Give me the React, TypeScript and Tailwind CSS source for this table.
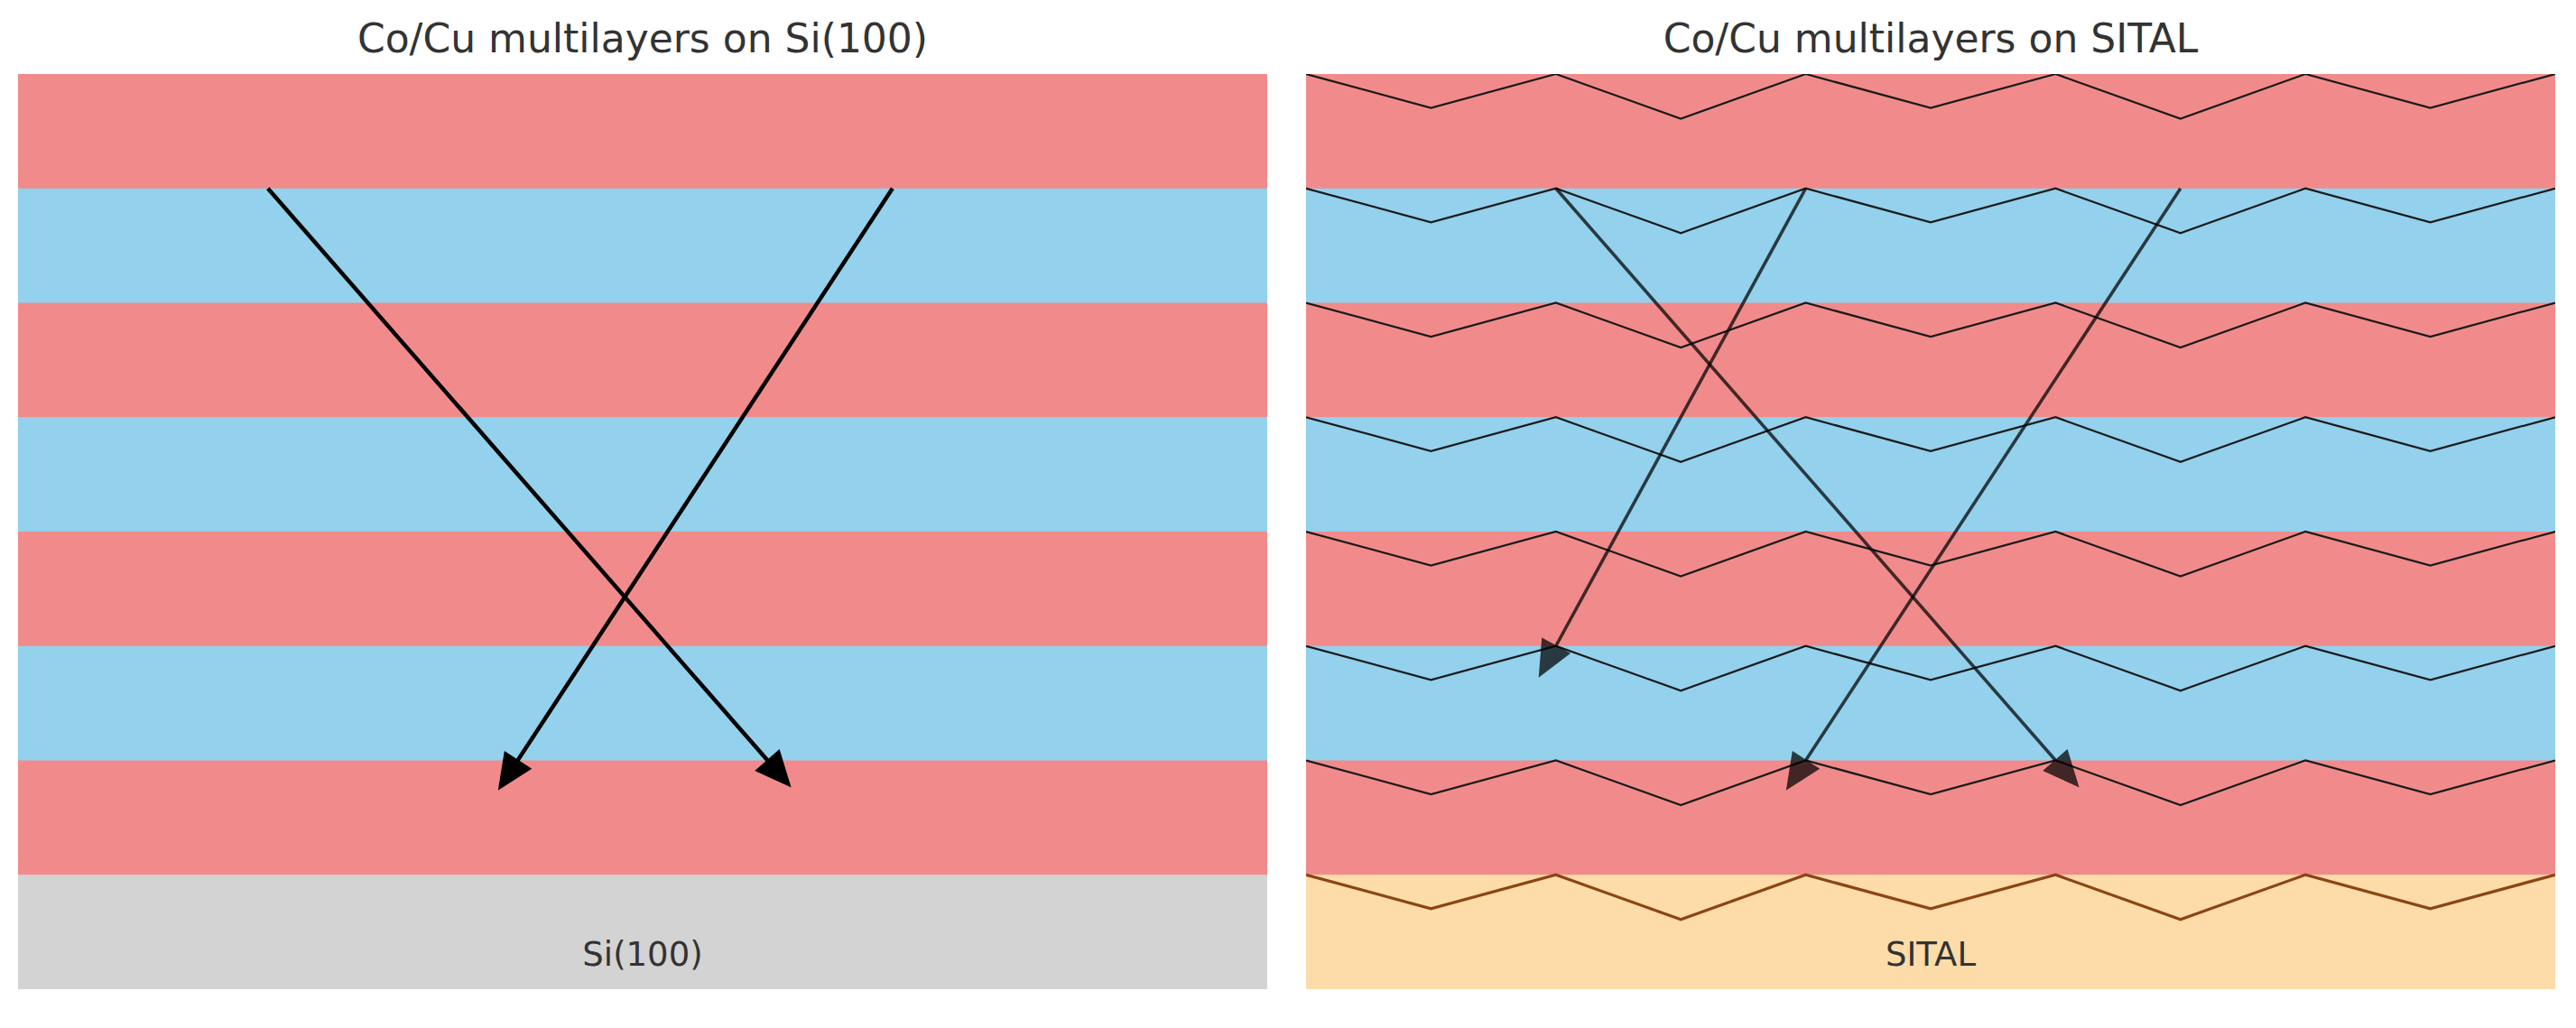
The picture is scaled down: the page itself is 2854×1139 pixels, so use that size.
const W = 1384;
const H = 1014;
const UX = W / 10; // one data unit across
const UY = H / 8; // one layer tall

const RED = '#F18B8B';
const BLUE = '#93D1EC';

type Arrow = { from: [number, number]; to: [number, number] };

// data coords -> svg px
const px = (x: number, y: number): [number, number] => [x * UX, (8 - y) * UY];

const headPoints = (bx: number, by: number, ux: number, uy: number, len = 38, half = 17) => {
  const tx = bx + ux * len;
  const ty = by + uy * len;
  const nx = -uy;
  const ny = ux;
  return `${tx},${ty} ${bx + nx * half},${by + ny * half} ${bx - nx * half},${by - ny * half}`;
};

const ArrowShape = ({ arrow, width, opacity }: { arrow: Arrow; width: number; opacity: number }) => {
  const [x1, y1] = px(...arrow.from);
  const [x2, y2] = px(...arrow.to);
  const dx = x2 - x1;
  const dy = y2 - y1;
  const l = Math.hypot(dx, dy);
  const ux = dx / l;
  const uy = dy / l;
  return (
    <g opacity={opacity}>
      <line x1={x1} y1={y1} x2={x2 + ux * 4} y2={y2 + uy * 4} stroke="#000" strokeWidth={width} />
      <polygon points={headPoints(x2, y2, ux, uy)} fill="#000" stroke="#000" strokeWidth={1.5} strokeLinejoin="miter" />
    </g>
  );
};

const zigzag = (k: number) => {
  const base = k * UY;
  const pts: string[] = [];
  for (let j = 0; j <= 10; j++) {
    const depth = j % 2 === 0 ? 0 : j % 4 === 1 ? 37.5 : 49.5;
    pts.push(`${j * UX},${base + depth}`);
  }
  return pts.join(' ');
};

const Layers = () => (
  <>
    {Array.from({ length: 7 }).map((_, i) => (
      <rect key={i} x={0} y={i * UY} width={W} height={UY + 0.5} fill={i % 2 === 0 ? RED : BLUE} />
    ))}
  </>
);

const SubstrateLabel = ({ text }: { text: string }) => (
  <text
    x={W / 2}
    y={988}
    textAnchor="middle"
    fontSize={37}
    fill="#333333"
    fontFamily="'DejaVu Sans', 'Liberation Sans', sans-serif"
  >
    {text}
  </text>
);

const leftArrows: Arrow[] = [
  { from: [2, 7], to: [6, 2] },
  { from: [7, 7], to: [4, 2] },
];

const rightArrows: Arrow[] = [
  { from: [2, 7], to: [6, 2] },
  { from: [4, 7], to: [2, 3] },
  { from: [7, 7], to: [4, 2] },
];

const SiPanel = () => (
  <svg width={W} height={H} viewBox={`0 0 ${W} ${H}`} className="block">
    <Layers />
    <rect x={0} y={7 * UY} width={W} height={UY} fill="#D3D3D3" />
    <SubstrateLabel text="Si(100)" />
    {leftArrows.map((a, i) => (
      <ArrowShape key={i} arrow={a} width={4.5} opacity={1} />
    ))}
  </svg>
);

const SitalPanel = () => (
  <svg width={W} height={H} viewBox={`0 0 ${W} ${H}`} className="block">
    <Layers />
    <rect x={0} y={7 * UY} width={W} height={UY} fill="#FDDCA9" />
    {Array.from({ length: 7 }).map((_, k) => (
      <polyline key={k} points={zigzag(k)} fill="none" stroke="#1a1a1a" strokeWidth={2.2} strokeLinejoin="miter" />
    ))}
    <polyline points={zigzag(7)} fill="none" stroke="#8B4513" strokeWidth={3.2} />
    <SubstrateLabel text="SITAL" />
    {rightArrows.map((a, i) => (
      <ArrowShape key={i} arrow={a} width={3.6} opacity={0.72} />
    ))}
  </svg>
);

const Figure = ({ title, children }: { title: string; children: React.ReactNode }) => (
  <div className="flex flex-col w-[1384px]">
    <h2 className="text-center text-[44px] leading-[50px] font-normal text-[#333333] font-['DejaVu_Sans','Liberation_Sans',sans-serif]">
      {title}
    </h2>
    <div className="mt-[14px]">{children}</div>
  </div>
);

export default function App() {
  return (
    <div className="w-[2854px] h-[1139px] bg-white flex gap-[43px] pl-[20px] pt-[18px] overflow-hidden">
      <Figure title="Co/Cu multilayers on Si(100)">
        <SiPanel />
      </Figure>
      <Figure title="Co/Cu multilayers on SITAL">
        <SitalPanel />
      </Figure>
    </div>
  );
}
